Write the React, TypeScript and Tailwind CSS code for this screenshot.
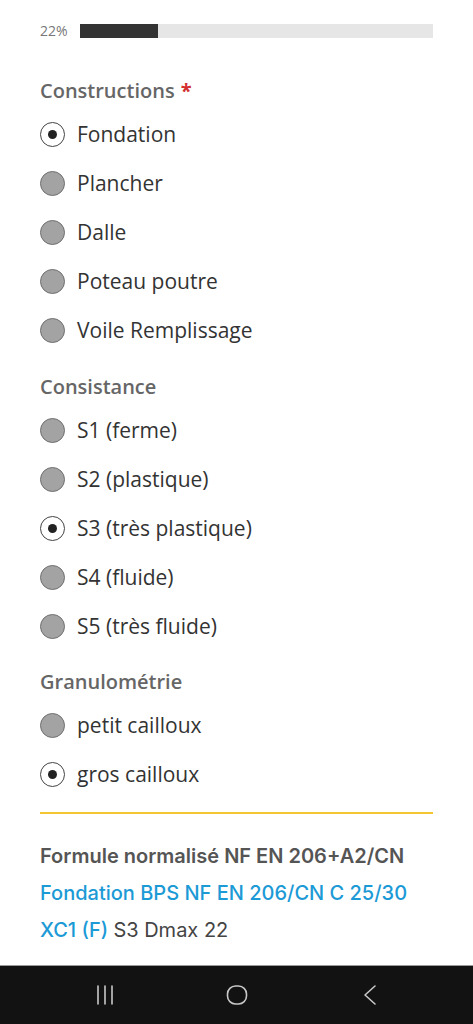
import React from "react";

type Option = { label: string; checked?: boolean };

const Radio: React.FC<Option> = ({ label, checked }) => {
  return (
    <div className="h-[49px] flex items-center">
      {checked ? (
        <span className="w-[25px] h-[25px] rounded-full border-[1.5px] border-[#444] bg-white flex items-center justify-center shrink-0">
          <span className="w-[9px] h-[9px] rounded-full bg-[#222]" />
        </span>
      ) : (
        <span className="w-[25px] h-[25px] rounded-full border-[1.5px] border-[#6f6f6f] bg-[#a3a3a3] shrink-0" />
      )}
      <span className="ml-[12px] text-[21px] text-[#333] leading-none">{label}</span>
    </div>
  );
};

const Section: React.FC<{ title: string; required?: boolean; options: Option[]; className?: string }> = ({
  title,
  required,
  options,
  className,
}) => {
  return (
    <div className={className}>
      <div className="h-[30px] mb-1 flex items-center text-[20px] font-semibold text-[#666]">
        {title}
        {required && <span className="ml-1.5 text-[#d32f2f] font-bold">*</span>}
      </div>
      {options.map((o) => (
        <Radio key={o.label} {...o} />
      ))}
    </div>
  );
};

export default function App() {
  return (
    <div className="min-h-screen flex flex-col bg-white" style={{ fontFamily: '"Open Sans", "Noto Sans", sans-serif' }}>
      <div className="flex-1 px-10">
        <div className="mt-6 h-[14px] flex items-center">
          <span className="w-10 text-[14px] text-[#777] leading-none">22%</span>
          <div className="flex-1 h-[14px] bg-[#e6e6e6]">
            <div className="h-full w-[22%] bg-[#333]" />
          </div>
        </div>

        <Section
          className="mt-[38px]"
          title="Constructions"
          required
          options={[
            { label: "Fondation", checked: true },
            { label: "Plancher" },
            { label: "Dalle" },
            { label: "Poteau poutre" },
            { label: "Voile Remplissage" },
          ]}
        />
        <Section
          className="mt-[17px]"
          title="Consistance"
          options={[
            { label: "S1 (ferme)" },
            { label: "S2 (plastique)" },
            { label: "S3 (très plastique)", checked: true },
            { label: "S4 (fluide)" },
            { label: "S5 (très fluide)" },
          ]}
        />
        <Section
          className="mt-[16px]"
          title="Granulométrie"
          options={[{ label: "petit cailloux" }, { label: "gros cailloux", checked: true }]}
        />

        <div className="mt-[13px] h-[2px] bg-[#f2c531]" />

        <div className="mt-6 text-[20px] leading-[37px] font-medium" style={{ fontFamily: 'Inter, "Noto Sans", sans-serif' }}>
          <div className="text-[#555] font-semibold">Formule normalisé NF EN 206+A2/CN</div>
          <div className="text-[#1c9ad6]">
            Fondation BPS NF EN 206/CN C 25/30
            <br />
            XC1 (F) <span className="text-[#444] font-normal">S3 Dmax 22</span>
          </div>
        </div>
      </div>

      <div className="h-[59px] bg-[#121212] border-t border-[#9a9a9a] flex items-center justify-center gap-[110px]">
        <svg width="22" height="22" viewBox="0 0 22 22" fill="none" stroke="#c8c8c8" strokeWidth="1.6" strokeLinecap="round">
          <path d="M4 2v18M11 2v18M18 2v18" />
        </svg>
        <svg width="22" height="22" viewBox="0 0 22 22" fill="none" stroke="#c8c8c8" strokeWidth="1.6">
          <rect x="1.5" y="2" width="19" height="18" rx="8" />
        </svg>
        <svg width="22" height="22" viewBox="0 0 22 22" fill="none" stroke="#c8c8c8" strokeWidth="1.6" strokeLinecap="round" strokeLinejoin="round">
          <path d="M17 2L7 11l10 9" />
        </svg>
      </div>
    </div>
  );
}
